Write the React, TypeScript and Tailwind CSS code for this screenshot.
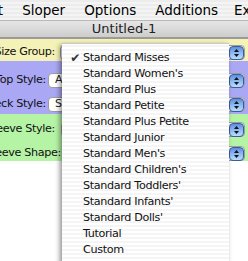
import React from 'react';

const items = [
  'Standard Misses',
  "Standard Women's",
  'Standard Plus',
  'Standard Petite',
  'Standard Plus Petite',
  'Standard Junior',
  "Standard Men's",
  "Standard Children's",
  "Standard Toddlers'",
  "Standard Infants'",
  "Standard Dolls'",
  'Tutorial',
  'Custom',
];

function Stepper() {
  return (
    <div className="w-[15px] h-[14px] rounded-[4px] border border-[#3c5c9c] bg-gradient-to-b from-[#5d8fe0] via-[#8fbaf2] to-[#b9dcfb] flex items-center justify-center">
      <svg width="7" height="10" viewBox="0 0 7 10">
        <path d="M3.5 1 L6 4 L1 4 Z" fill="#111" />
        <path d="M3.5 9 L6 6 L1 6 Z" fill="#111" />
      </svg>
    </div>
  );
}

function Row({ label, labelW, gap, value }: { label: string; labelW: string; gap: string; value: string }) {
  return (
    <div className="flex items-center h-[15px] pr-[3px]">
      <div className={`${labelW} flex justify-end overflow-hidden whitespace-nowrap text-[11.2px] tracking-[-0.35px] text-[#111]`}>
        {label}
      </div>
      <div className={`${gap} flex-1 h-[15px] flex items-center justify-between bg-white border border-[#9c9c9c] rounded-[4px] pl-[6px] text-[11.2px] tracking-[-0.35px] text-[#222]`}>
        <span className="whitespace-nowrap overflow-hidden">{value}</span>
        <Stepper />
      </div>
    </div>
  );
}

export default function App() {
  return (
    <div className="relative w-[248px] h-[261px] overflow-hidden bg-white font-['DejaVu_Sans',sans-serif]">
      {/* Menu bar */}
      <div className="h-[21px] flex items-center gap-[19px] border-b border-[#b8b8b8] bg-[repeating-linear-gradient(0deg,#f4f4f4_0px,#f4f4f4_2px,#ececec_2px,#ececec_4px)] text-[13.5px] text-black whitespace-nowrap">
        <span className="-ml-[23px]">Edit</span>
        <span>Sloper</span>
        <span>Options</span>
        <span>Additions</span>
        <span className="-ml-[3px]">Extras</span>
      </div>

      {/* Title bar */}
      <div className="h-[18px] flex items-center justify-center bg-gradient-to-b from-[#e6e6e6] to-[#cdcdcd] border-b-2 border-[#9a9a9a] text-[13px] text-[#222]">
        Untitled-1
      </div>

      {/* Panels */}
      <div className="bg-[#f4f2b6] h-[22px] pt-[6px]">
        <Row label="Size Group:" labelW="w-[55px]" gap="ml-[5px]" value="Standard Misses" />
      </div>
      <div className="bg-[#aaa7f4] h-[53px] pt-[12px] flex flex-col gap-[9px]">
        <Row label="Top Style:" labelW="w-[46px]" gap="ml-[2px]" value="Average" />
        <Row label="Neck Style:" labelW="w-[46px]" gap="ml-[2px]" value="Standard" />
      </div>
      <div className="bg-[#b5f3a5] h-[47px] pt-[8px] flex flex-col gap-[9px]">
        <Row label="Sleeve Style:" labelW="w-[55px]" gap="ml-[6px]" value="Standard" />
        <Row label="Sleeve Shape:" labelW="w-[61px]" gap="ml-[2px]" value="Standard" />
      </div>

      {/* Popup menu */}
      <div className="absolute left-[62px] top-[43px] w-[167px] h-[230px] pt-[6px] border-t border-[#c8c8c8] bg-[repeating-linear-gradient(0deg,#ffffff_0px,#ffffff_2px,#f5f5f5_2px,#f5f5f5_4px)] shadow-[-2px_2px_5px_rgba(0,0,0,0.45)]">
        {items.map((it, i) => (
          <div key={it} className="h-[16px] flex items-center text-[11.2px] tracking-[-0.35px] text-[#111] whitespace-nowrap">
            <span className="w-[21px] flex justify-end pr-[3px] text-[12px] text-[#333]">{i === 0 ? '✔' : ''}</span>
            <span>{it}</span>
          </div>
        ))}
      </div>
    </div>
  );
}
